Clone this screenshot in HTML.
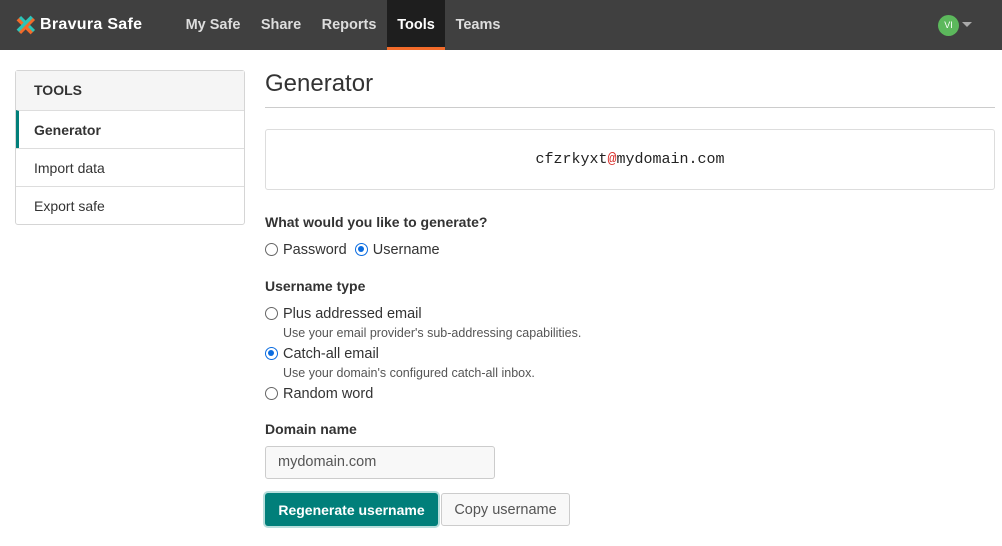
<!DOCTYPE html>
<html><head><meta charset="utf-8"><style>
*{box-sizing:border-box;margin:0;padding:0}
body{width:1002px;height:546px;overflow:hidden;background:#fff;font-family:"Liberation Sans",sans-serif;color:#333;font-size:14px}
.nav{height:50px;background:#404040;position:relative}
.logo{position:absolute;left:16px;top:15px;display:flex;align-items:center;color:#fff;font-weight:bold;font-size:16px;letter-spacing:.3px}
.nav a{position:absolute;top:0;height:50px;line-height:50px;color:#ddd;font-weight:bold;font-size:14.5px;text-decoration:none;text-align:center}
.nav a.act{background:#1e1e1e;color:#fff;border-bottom:3px solid #f26b2a;line-height:50px}
.av{position:absolute;left:938px;top:15px;width:21px;height:21px;border-radius:50%;background:#5cb85c;color:#fff;font-size:9px;text-align:center;line-height:21px}
.car{position:absolute;left:962px;top:22px;border-left:5px solid transparent;border-right:5px solid transparent;border-top:5px solid #aaa}
.side{position:absolute;left:15px;top:70px;width:230px;border:1px solid #d5d5d5;border-radius:3px}
.side div{height:39px;line-height:38px;padding-left:18px;border-top:1px solid #ddd;font-size:14px;color:#333}
.side div:first-child{border-top:0;height:39px;background:#f5f5f5;font-weight:bold}
.side div+div{height:38px;line-height:38px}
.side .on{border-left:3px solid #017f7a;padding-left:15px;font-weight:bold}
h1{position:absolute;left:265px;top:70px;font-weight:normal;font-size:24px;color:#333}
.hr{position:absolute;left:265px;top:107px;width:730px;border-top:1px solid #ccc}
.out{position:absolute;left:265px;top:129px;width:730px;height:61px;border:1px solid #ddd;border-radius:3px;text-align:center;line-height:60px;font-family:"Liberation Mono",monospace;font-size:15px;color:#222}
.t{position:absolute;left:265px;font-size:14.5px;top:0}
.b{font-weight:bold;color:#333;font-size:14px}
.r{display:inline-block;width:13px;height:13px;border:1px solid #666;border-radius:50%;vertical-align:-2px;margin-right:5px;position:relative}
.r.c{border:1.5px solid #0b6ce0}
.r.c::after{content:"";position:absolute;left:2px;top:2px;width:6px;height:6px;border-radius:50%;background:#0b6ce0}
.s{font-size:12.5px;color:#555;left:283px}
.inp{position:absolute;left:265px;top:446px;width:230px;height:33px;border:1px solid #ccc;border-radius:3px;background:#f8f8f8;padding-left:12px;line-height:31px;color:#555;font-size:14.5px}
.btn1{position:absolute;left:265px;top:493px;width:173px;height:33px;background:#017f7a;border-radius:3px;color:#fff;font-weight:bold;text-align:center;line-height:34px;font-size:14px;box-shadow:0 0 0 2px #b8dedc}
.btn2{position:absolute;left:441px;top:493px;width:129px;height:33px;border:1px solid #ccc;border-radius:3px;background:#f8f8f8;color:#555;text-align:center;line-height:33px;font-size:14.5px}
</style></head><body>
<div class="nav">
<div class="logo"><svg width="20" height="20" viewBox="0 0 20 20"><path d="M2 4 L16 18" stroke="#f26b2a" stroke-width="4"/><path d="M16 2 L2 16" stroke="#2cc4b8" stroke-width="4"/><path d="M4 2 L18 16" stroke="#2cc4b8" stroke-width="3"/><path d="M18 4 L4 18" stroke="#f26b2a" stroke-width="3"/></svg><span style="margin-left:4px">Bravura Safe</span></div>
<a style="left:177px;width:72px">My Safe</a>
<a style="left:251px;width:60px">Share</a>
<a style="left:313px;width:72px">Reports</a>
<a class="act" style="left:387px;width:58px">Tools</a>
<a style="left:447px;width:62px">Teams</a>
<div class="av">VI</div><div class="car"></div>
</div>
<div class="side"><div>TOOLS</div><div class="on">Generator</div><div>Import data</div><div>Export safe</div></div>
<h1>Generator</h1><div class="hr"></div>
<div class="out">cfzrkyxt<span style="color:#d9302c">@</span>mydomain.com</div>
<div class="t b" style="top:214px">What would you like to generate?</div>
<div class="t" style="top:242px"><span class="r"></span>Password&nbsp;&nbsp;<span class="r c"></span>Username</div>
<div class="t b" style="top:278px">Username type</div>
<div class="t" style="top:306px"><span class="r"></span>Plus addressed email</div>
<div class="t s" style="top:326px">Use your email provider's sub-addressing capabilities.</div>
<div class="t" style="top:346px"><span class="r c"></span>Catch-all email</div>
<div class="t s" style="top:366px">Use your domain's configured catch-all inbox.</div>
<div class="t" style="top:386px"><span class="r"></span>Random word</div>
<div class="t b" style="top:421px">Domain name</div>
<div class="inp">mydomain.com</div>
<div class="btn1">Regenerate username</div>
<div class="btn2">Copy username</div>
</body></html>
